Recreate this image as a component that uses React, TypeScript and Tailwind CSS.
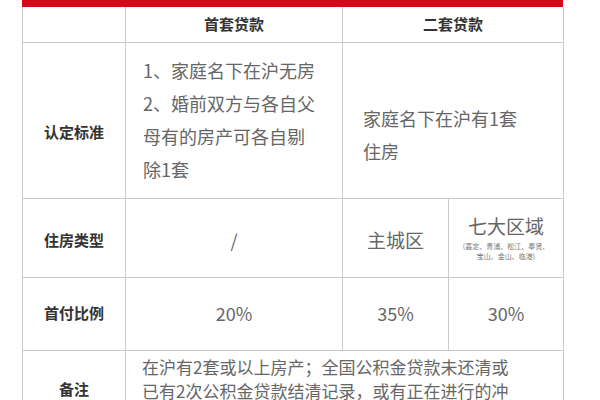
export default function App() {
  const cell = "border border-[#cacaca] text-center align-middle";
  const label = "font-bold text-[15px] text-[#333]";
  const body = "text-[18px] text-[#666] leading-[33px]";

  return (
    <div
      className="w-[600px] h-[400px] overflow-hidden bg-white"
      style={{ fontFamily: '"Noto Sans CJK SC", "Noto Sans", sans-serif' }}
    >
      <div className="ml-[22px] w-[541px]">
        <div className="h-[7px] bg-[#d6061b]" />
        <table className="w-[541px] table-fixed border-collapse">
          <colgroup>
            <col className="w-[103px]" />
            <col className="w-[217px]" />
            <col className="w-[106px]" />
            <col className="w-[115px]" />
          </colgroup>
          <tbody>
            <tr className="h-[35px]">
              <td className={`${cell} border-t-0`} />
              <td className={`${cell} border-t-0 ${label}`}>首套贷款</td>
              <td className={`${cell} border-t-0 ${label}`} colSpan={2}>
                二套贷款
              </td>
            </tr>
            <tr className="h-[156px]">
              <td className={`${cell} ${label} pt-[24px]`}>认定标准</td>
              <td className={`${cell} ${body} text-left pl-[17px] pr-2`}>
                1、家庭名下在沪无房
                <br />
                2、婚前双方与各自父
                <br />
                母有的房产可各自剔
                <br />
                除1套
              </td>
              <td
                className={`${cell} ${body} text-left pl-[20px] pr-2 pt-[30px]`}
                colSpan={2}
              >
                家庭名下在沪有1套
                <br />
                住房
              </td>
            </tr>
            <tr className="h-[79px]">
              <td className={`${cell} ${label} pt-[6px]`}>住房类型</td>
              <td className={`${cell} text-[18px] text-[#666] pt-[6px]`}>/</td>
              <td className={`${cell} text-[19px] text-[#666] pt-[6px]`}>主城区</td>
              <td className={`${cell} text-[#666]`}>
                <div className="text-[19px] leading-[24px]">七大区域</div>
                <div className="text-[7px] leading-[10px] mt-[3px] text-[#777]">
                  (嘉定、青浦、松江、奉贤、
                  <br />
                  宝山、金山、临港)
                </div>
              </td>
            </tr>
            <tr className="h-[73px]">
              <td className={`${cell} ${label}`}>首付比例</td>
              <td className={`${cell} text-[18px] text-[#666]`}>20%</td>
              <td className={`${cell} text-[18px] text-[#666]`}>35%</td>
              <td className={`${cell} text-[18px] text-[#666]`}>30%</td>
            </tr>
            <tr className="h-[90px]">
              <td className={`${cell} ${label} align-top pt-[27px]`}>备注</td>
              <td
                className={`${cell} text-[17px] text-[#666] leading-[24px] text-left pl-[16px] align-top pt-[4px] whitespace-nowrap`}
                colSpan={3}
              >
                在沪有2套或以上房产；全国公积金贷款未还清或
                <br />
                已有2次公积金贷款结清记录，或有正在进行的冲
                <br />
                抵贷款
              </td>
            </tr>
          </tbody>
        </table>
      </div>
    </div>
  );
}
